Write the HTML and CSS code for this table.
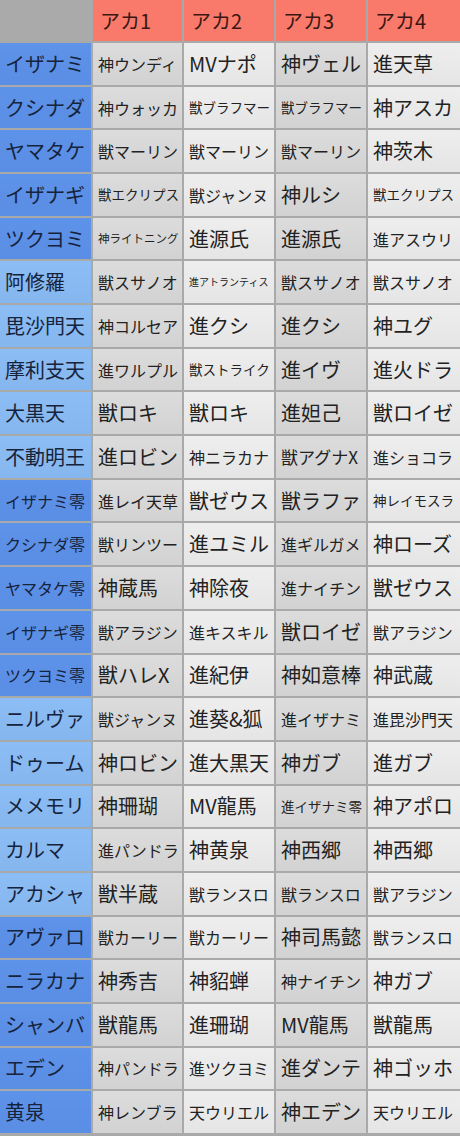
FILE: index.html
```html
<!DOCTYPE html>
<html lang="ja">
<head>
<meta charset="utf-8">
<title>アカ表</title>
<link rel="stylesheet" href="styles.css">
</head>
<body>
<div class="tbl">
  <div class="corner"></div>
  <div class="hd">アカ1</div><div class="hd">アカ2</div><div class="hd">アカ3</div><div class="hd">アカ4</div>

  <div class="rn dark f20">イザナミ</div>
  <div class="c a f16">神ウンディ</div><div class="c b f20">MVナポ</div><div class="c a f20">神ヴェル</div><div class="c b f20">進天草</div>

  <div class="rn dark f20">クシナダ</div>
  <div class="c a f16">神ウォッカ</div><div class="c b f13">獣ブラフマー</div><div class="c a f13">獣ブラフマー</div><div class="c b f20">神アスカ</div>

  <div class="rn dark f20">ヤマタケ</div>
  <div class="c a f16">獣マーリン</div><div class="c b f16">獣マーリン</div><div class="c a f16">獣マーリン</div><div class="c b f20">神茨木</div>

  <div class="rn dark f20">イザナギ</div>
  <div class="c a f13">獣エクリプス</div><div class="c b f16">獣ジャンヌ</div><div class="c a f20">神ルシ</div><div class="c b f13">獣エクリプス</div>

  <div class="rn dark f20">ツクヨミ</div>
  <div class="c a f11">神ライトニング</div><div class="c b f20">進源氏</div><div class="c a f20">進源氏</div><div class="c b f16">進アスウリ</div>

  <div class="rn light f20">阿修羅</div>
  <div class="c a f16">獣スサノオ</div><div class="c b f10">進アトランティス</div><div class="c a f16">獣スサノオ</div><div class="c b f16">獣スサノオ</div>

  <div class="rn light f20">毘沙門天</div>
  <div class="c a f16">神コルセア</div><div class="c b f20">進クシ</div><div class="c a f20">進クシ</div><div class="c b f20">神ユグ</div>

  <div class="rn light f20">摩利支天</div>
  <div class="c a f16">進ワルプル</div><div class="c b f13">獣ストライク</div><div class="c a f20">進イヴ</div><div class="c b f20">進火ドラ</div>

  <div class="rn light f20">大黒天</div>
  <div class="c a f20">獣ロキ</div><div class="c b f20">獣ロキ</div><div class="c a f20">進妲己</div><div class="c b f20">獣ロイゼ</div>

  <div class="rn light f20">不動明王</div>
  <div class="c a f20">進ロビン</div><div class="c b f16">神ニラカナ</div><div class="c a f17">獣アグナX</div><div class="c b f16">進ショコラ</div>

  <div class="rn dark f16">イザナミ零</div>
  <div class="c a f16">進レイ天草</div><div class="c b f20">獣ゼウス</div><div class="c a f20">獣ラファ</div><div class="c b f13">神レイモスラ</div>

  <div class="rn dark f16">クシナダ零</div>
  <div class="c a f16">獣リンツー</div><div class="c b f20">進ユミル</div><div class="c a f16">進ギルガメ</div><div class="c b f20">神ローズ</div>

  <div class="rn dark f16">ヤマタケ零</div>
  <div class="c a f20">神蔵馬</div><div class="c b f20">神除夜</div><div class="c a f16">進ナイチン</div><div class="c b f20">獣ゼウス</div>

  <div class="rn dark f16">イザナギ零</div>
  <div class="c a f16">獣アラジン</div><div class="c b f16">進キスキル</div><div class="c a f20">獣ロイゼ</div><div class="c b f16">獣アラジン</div>

  <div class="rn dark f16">ツクヨミ零</div>
  <div class="c a f20">獣ハレX</div><div class="c b f20">進紀伊</div><div class="c a f20">神如意棒</div><div class="c b f20">神武蔵</div>

  <div class="rn light f20">ニルヴァ</div>
  <div class="c a f16">獣ジャンヌ</div><div class="c b f20">進葵&amp;狐</div><div class="c a f16">進イザナミ</div><div class="c b f16">進毘沙門天</div>

  <div class="rn light f20">ドゥーム</div>
  <div class="c a f20">神ロビン</div><div class="c b f20">進大黒天</div><div class="c a f20">神ガブ</div><div class="c b f20">進ガブ</div>

  <div class="rn light f20">メメモリ</div>
  <div class="c a f20">神珊瑚</div><div class="c b f20">MV龍馬</div><div class="c a f13">進イザナミ零</div><div class="c b f20">神アポロ</div>

  <div class="rn light f20">カルマ</div>
  <div class="c a f16">進パンドラ</div><div class="c b f20">神黄泉</div><div class="c a f20">神西郷</div><div class="c b f20">神西郷</div>

  <div class="rn light f20">アカシャ</div>
  <div class="c a f20">獣半蔵</div><div class="c b f16">獣ランスロ</div><div class="c a f16">獣ランスロ</div><div class="c b f16">獣アラジン</div>

  <div class="rn dark f20">アヴァロ</div>
  <div class="c a f16">獣カーリー</div><div class="c b f16">獣カーリー</div><div class="c a f20">神司馬懿</div><div class="c b f16">獣ランスロ</div>

  <div class="rn dark f20">ニラカナ</div>
  <div class="c a f20">神秀吉</div><div class="c b f20">神貂蝉</div><div class="c a f16">神ナイチン</div><div class="c b f20">神ガブ</div>

  <div class="rn dark f20">シャンバ</div>
  <div class="c a f20">獣龍馬</div><div class="c b f20">進珊瑚</div><div class="c a f20">MV龍馬</div><div class="c b f20">獣龍馬</div>

  <div class="rn dark f20">エデン</div>
  <div class="c a f16">神パンドラ</div><div class="c b f16">進ツクヨミ</div><div class="c a f20">進ダンテ</div><div class="c b f20">神ゴッホ</div>

  <div class="rn dark f20">黄泉</div>
  <div class="c a f16">神レンブラ</div><div class="c b f16">天ウリエル</div><div class="c a f20">神エデン</div><div class="c b f16">天ウリエル</div>
</div>
</body>
</html>
```

FILE: styles.css
```css
html, body {
  margin: 0;
  padding: 0;
  background: #a9a9a9;
}

.tbl {
  display: grid;
  grid-template-columns: 91px 89px 90px 90px 92px;
  grid-template-rows: 41px repeat(25, 1fr);
  gap: 2px;
  width: 460px;
  height: 1136px;
  padding-bottom: 3px;
  box-sizing: border-box;
  background: #a9a9a9;
  font-family: "Noto Sans CJK JP", "Noto Sans", sans-serif;
}

.tbl > div {
  display: flex;
  align-items: center;
  white-space: nowrap;
  overflow: hidden;
  line-height: 1;
}

.corner {
  background: #aaaaaa;
}

.hd {
  background: #f97a6a;
  color: #3a1712;
  font-size: 20px;
  padding-left: 7px;
}

.rn {
  padding-left: 5px;
  color: #16233c;
}

.rn.dark {
  background: linear-gradient(to bottom, #5e93ea, #5a8de4);
}

.rn.light {
  background: linear-gradient(to bottom, #8cbdf4, #86b6ee);
}

.c {
  padding-left: 5px;
  color: #222222;
}

.c.a {
  background: linear-gradient(to bottom, #dcdcdc, #d2d2d2);
}

.c.b {
  background: linear-gradient(to bottom, #eeeeee, #e5e5e5);
}

.f20 { font-size: 20px; }
.f17 { font-size: 17px; }
.f16 { font-size: 16px; }
.f13 { font-size: 13.5px; }
.f11 { font-size: 11.5px; }
.f10 { font-size: 10px; }
```
